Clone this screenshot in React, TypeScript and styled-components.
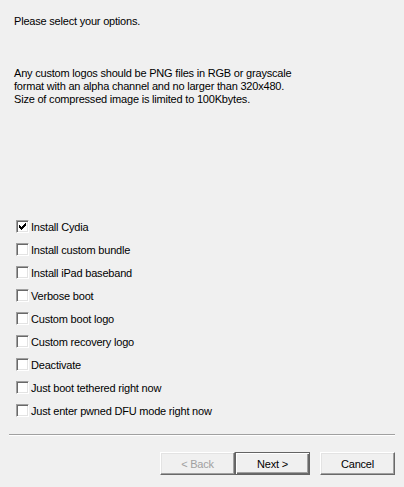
import styled, { createGlobalStyle } from 'styled-components';

const GlobalStyle = createGlobalStyle`
  html, body {
    margin: 0;
    padding: 0;
    background: #f0f0f0;
  }
  body {
    font-family: "Liberation Sans", Arial, sans-serif;
    font-size: 11px;
    letter-spacing: -0.2px;
    color: #000;
  }
`;

const Wizard = styled.div`
  width: 404px;
  height: 487px;
  box-sizing: border-box;
  display: flex;
  flex-direction: column;
  background: #f0f0f0;
`;

const Body = styled.div`
  padding: 15px 13px 0 14px;
  display: flex;
  flex-direction: column;
`;

const Intro = styled.p`
  margin: 0;
  line-height: 13px;
`;

const Note = styled.p`
  margin: 39px 0 0;
  line-height: 13px;
`;

const Options = styled.ul`
  list-style: none;
  margin: 109px 0 0 2px;
  padding: 0;
  display: flex;
  flex-direction: column;
`;

const Option = styled.li`
  height: 23px;
  display: flex;
  align-items: center;
  gap: 2px;
`;

const Box = styled.span`
  width: 13px;
  height: 13px;
  box-sizing: border-box;
  background: #fff;
  border: 1px solid;
  border-color: #a0a0a0 #fff #fff #a0a0a0;
  box-shadow: inset 1px 1px 0 #696969, inset -1px -1px 0 #e3e3e3;
  display: flex;
  align-items: center;
  justify-content: center;
`;

const Separator = styled.hr`
  margin: 12px 9px 0 9px;
  height: 0;
  border: 0;
  border-top: 1px solid #a0a0a0;
  border-bottom: 1px solid #fff;
`;

const Buttons = styled.div`
  display: flex;
  justify-content: flex-end;
  padding: 16px 9px 0 0;
`;

const Button = styled.button<{ $primary?: boolean; $gap?: number }>`
  width: 75px;
  height: 23px;
  margin-left: ${(p) => p.$gap ?? 0}px;
  padding: 0;
  box-sizing: border-box;
  font-family: "Liberation Sans", Arial, sans-serif;
  font-size: 11px;
  letter-spacing: -0.2px;
  color: ${(p) => (p.disabled ? '#a0a0a0' : '#000')};
  background: #f0f0f0;
  border: 1px solid;
  border-color: ${(p) =>
    p.$primary ? '#646464' : '#fff #696969 #696969 #fff'};
  box-shadow: ${(p) =>
    p.$primary
      ? 'inset 1px 1px 0 #fff, inset -1px -1px 0 #696969, inset -2px -2px 0 #a0a0a0'
      : 'inset -1px -1px 0 #a0a0a0, inset 1px 1px 0 #e3e3e3'};
`;

const Check = () => (
  <svg width="7" height="7" viewBox="0 0 7 7">
    <path d="M0 2h1v1h1v1h1V3h1V2h1V1h1V0h1v3H6v1H5v1H4v1H3v1H2V6H1V5H0z" fill="#000" />
  </svg>
);

const options = [
  { label: 'Install Cydia', checked: true },
  { label: 'Install custom bundle' },
  { label: 'Install iPad baseband' },
  { label: 'Verbose boot' },
  { label: 'Custom boot logo' },
  { label: 'Custom recovery logo' },
  { label: 'Deactivate' },
  { label: 'Just boot tethered right now' },
  { label: 'Just enter pwned DFU mode right now' },
];

export default function App() {
  return (
    <>
      <GlobalStyle />
      <Wizard>
        <Body>
          <Intro>Please select your options.</Intro>
          <Note>
            Any custom logos should be PNG files in RGB or grayscale
            <br />
            format with an alpha channel and no larger than 320x480.
            <br />
            Size of compressed image is limited to 100Kbytes.
          </Note>
          <Options>
            {options.map((o) => (
              <Option key={o.label}>
                <Box>{o.checked && <Check />}</Box>
                <span>{o.label}</span>
              </Option>
            ))}
          </Options>
        </Body>
        <Separator />
        <Buttons>
          <Button disabled>&lt; Back</Button>
          <Button $primary>Next &gt;</Button>
          <Button $gap={10}>Cancel</Button>
        </Buttons>
      </Wizard>
    </>
  );
}
